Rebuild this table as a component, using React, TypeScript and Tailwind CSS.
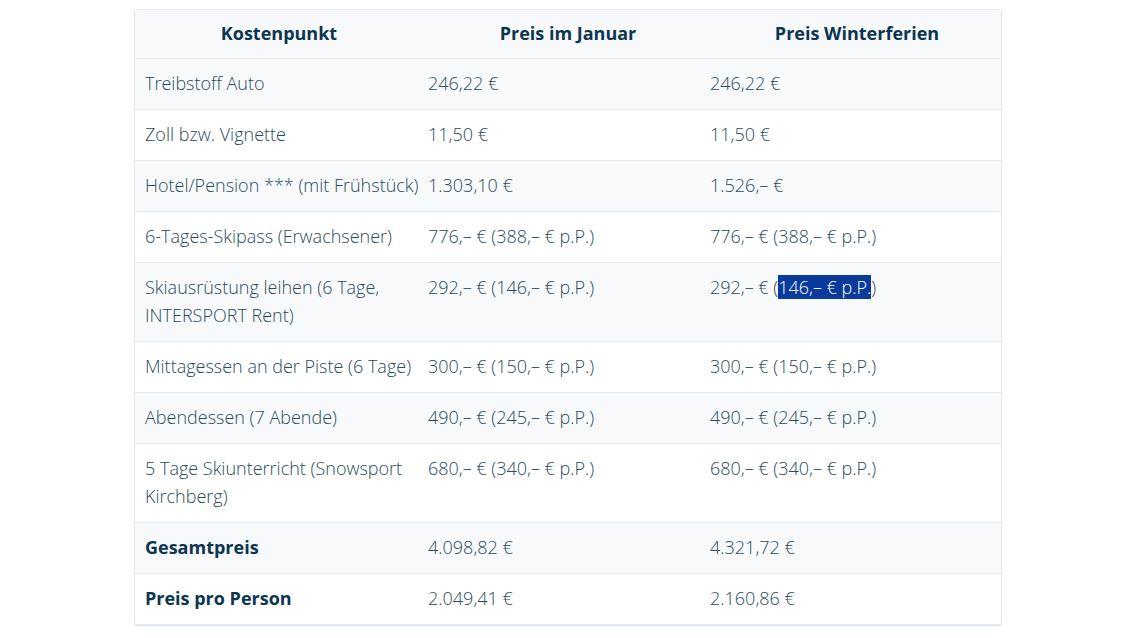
import React from 'react';

type Row = {
    label: string;
    jan: string;
    winter: React.ReactNode;
    bold?: boolean;
};

const rows: Row[] = [
    { label: 'Treibstoff Auto', jan: '246,22 €', winter: '246,22 €' },
    { label: 'Zoll bzw. Vignette', jan: '11,50 €', winter: '11,50 €' },
    { label: 'Hotel/Pension *** (mit Frühstück)', jan: '1.303,10 €', winter: '1.526,– €' },
    { label: '6-Tages-Skipass (Erwachsener)', jan: '776,– € (388,– € p.P.)', winter: '776,– € (388,– € p.P.)' },
    {
        label: 'Skiausrüstung leihen (6 Tage, INTERSPORT Rent)',
        jan: '292,– € (146,– € p.P.)',
        winter: (
            <>
                292,– € (<span className="bg-[#0a3b9c] text-white">146,– € p.P.</span>)
            </>
        ),
    },
    { label: 'Mittagessen an der Piste (6 Tage)', jan: '300,– € (150,– € p.P.)', winter: '300,– € (150,– € p.P.)' },
    { label: 'Abendessen (7 Abende)', jan: '490,– € (245,– € p.P.)', winter: '490,– € (245,– € p.P.)' },
    { label: '5 Tage Skiunterricht (Snowsport Kirchberg)', jan: '680,– € (340,– € p.P.)', winter: '680,– € (340,– € p.P.)' },
    { label: 'Gesamtpreis', jan: '4.098,82 €', winter: '4.321,72 €', bold: true },
    { label: 'Preis pro Person', jan: '2.049,41 €', winter: '2.160,86 €', bold: true },
];

export default function App() {
    return (
        <div className="min-h-screen bg-white pt-[9px]" style={{ fontFamily: '"Open Sans", "Noto Sans", sans-serif' }}>
            <div className="w-[868px] ml-[134px] rounded-[3px] border border-[#e2e9f0] shadow-[0_1px_1px_rgba(200,212,225,0.6)] overflow-hidden">
                <table className="w-full border-collapse table-fixed text-[18px] leading-[28px]">
                    <colgroup>
                        <col className="w-[289px]" />
                        <col className="w-[282px]" />
                        <col />
                    </colgroup>
                    <thead>
                        <tr className="bg-[#f7f9fb] border-b border-[#e2e9f0]">
                            <th className="pl-[1px] pr-[2px] pt-[9px] pb-[11px] text-center font-bold text-[#0b3550]">Kostenpunkt</th>
                            <th className="pl-[8px] pr-[2px] pt-[9px] pb-[11px] text-center font-bold text-[#0b3550]">Preis im Januar</th>
                            <th className="pl-[9px] pr-[2px] pt-[9px] pb-[11px] text-center font-bold text-[#0b3550]">Preis Winterferien</th>
                        </tr>
                    </thead>
                    <tbody>
                        {rows.map((r, i) => (
                            <tr
                                key={r.label}
                                className={`${i % 2 === 0 ? 'bg-[#f7f9fb]' : 'bg-white'} ${i < rows.length - 1 ? 'border-b border-[#e2e9f0]' : ''}`}
                            >
                                <td className={`pl-[10px] pr-0 pt-[10px] pb-[12px] align-top ${r.bold ? 'font-bold text-[#0b3550]' : 'font-[350] text-[#2b4b5d]'}`}>
                                    {r.label}
                                </td>
                                <td className="pl-[4px] pr-[2px] pt-[10px] pb-[12px] align-top font-[350] text-[#2b4b5d]">{r.jan}</td>
                                <td className="pl-[4px] pr-[2px] pt-[10px] pb-[12px] align-top font-[350] text-[#2b4b5d]">{r.winter}</td>
                            </tr>
                        ))}
                    </tbody>
                </table>
            </div>
        </div>
    );
}
